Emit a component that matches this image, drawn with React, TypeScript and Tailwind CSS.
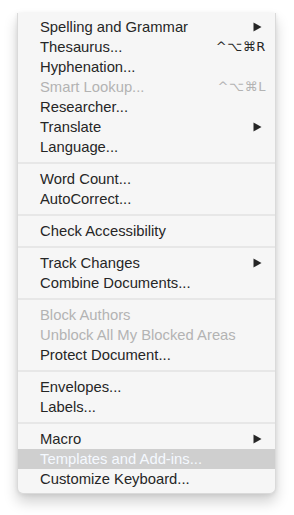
type Item = {
	label: string;
	shortcut?: string;
	submenu?: boolean;
	disabled?: boolean;
	selected?: boolean;
};

const groups: Item[][] = [
	[
		{ label: 'Spelling and Grammar', submenu: true },
		{ label: 'Thesaurus...', shortcut: '^⌥⌘R' },
		{ label: 'Hyphenation...' },
		{ label: 'Smart Lookup...', shortcut: '^⌥⌘L', disabled: true },
		{ label: 'Researcher...' },
		{ label: 'Translate', submenu: true },
		{ label: 'Language...' }
	],
	[{ label: 'Word Count...' }, { label: 'AutoCorrect...' }],
	[{ label: 'Check Accessibility' }],
	[{ label: 'Track Changes', submenu: true }, { label: 'Combine Documents...' }],
	[
		{ label: 'Block Authors', disabled: true },
		{ label: 'Unblock All My Blocked Areas', disabled: true },
		{ label: 'Protect Document...' }
	],
	[{ label: 'Envelopes...' }, { label: 'Labels...' }],
	[
		{ label: 'Macro', submenu: true },
		{ label: 'Templates and Add-ins...', selected: true },
		{ label: 'Customize Keyboard...' }
	]
];

function SubmenuArrow({ dim }: { dim?: boolean }) {
	return (
		<svg width="9" height="10" viewBox="0 0 9 10" className="shrink-0">
			<path d="M0.5 0.5 L8.5 5 L0.5 9.5 Z" fill={dim ? '#f5f9ff' : '#262626'} />
		</svg>
	);
}

function MenuRow({ item }: { item: Item }) {
	const color = item.selected
		? 'text-[#f5f9ff] bg-[#cfcfcf]'
		: item.disabled
			? 'text-[#b3b3b3]'
			: 'text-[#262626]';

	return (
		<div className={`flex h-5 items-center justify-between pl-[22px] pr-[12px] ${color}`}>
			<span className="leading-5">{item.label}</span>
			{item.shortcut && (
				<span className="-mr-[3px] font-['DejaVu_Sans',sans-serif] text-[13px] leading-5 tracking-[0.6px]">
					{item.shortcut}
				</span>
			)}
			{item.submenu && (
				<span className="pr-[1px]">
					<SubmenuArrow dim={item.selected} />
				</span>
			)}
		</div>
	);
}

export default function App() {
	return (
		<div className="h-[515px] w-[294px] bg-white pt-[13px] font-['Liberation_Sans',Arial,sans-serif] text-[14.8px]">
			<div className="ml-[17px] w-[259px] rounded-b-[6px] border-x border-b border-[#dadada] bg-[#f6f6f6] pb-1 pt-1 shadow-[0_8px_14px_rgba(0,0,0,0.18),0_1px_4px_rgba(0,0,0,0.08)]">
				{groups.map((group, gi) => (
					<div key={gi}>
						{gi > 0 && (
							<div className="flex h-3 items-center">
								<div className="h-[2px] w-full bg-[#e7e7e7]" />
							</div>
						)}
						{group.map((item) => (
							<MenuRow key={item.label} item={item} />
						))}
					</div>
				))}
			</div>
		</div>
	);
}
